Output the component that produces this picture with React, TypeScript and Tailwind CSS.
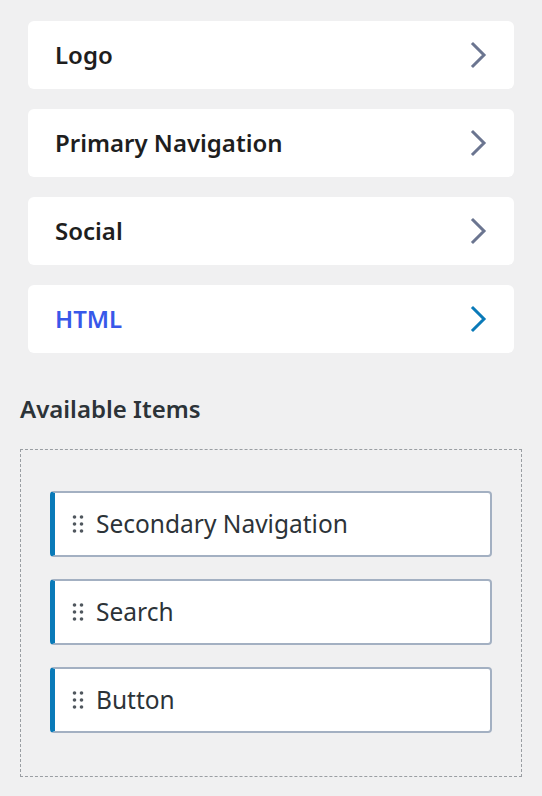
import React from "react";

const sections = [
  { label: "Logo", active: false },
  { label: "Primary Navigation", active: false },
  { label: "Social", active: false },
  { label: "HTML", active: true },
];

const available = ["Secondary Navigation", "Search", "Button"];

function Chevron({ className }: { className: string }) {
  return (
    <svg width="18" height="28" viewBox="0 0 18 28" fill="none" className={className}>
      <path d="M3 3 L14 14 L3 25" stroke="currentColor" strokeWidth="3" strokeLinecap="square" />
    </svg>
  );
}

function DragHandle() {
  return (
    <svg width="12" height="20" viewBox="0 0 12 20" className="text-[#50575e] shrink-0">
      {[3, 10, 17].map((y) => (
        <g key={y}>
          <circle cx="2.5" cy={y} r="1.8" fill="currentColor" />
          <circle cx="9.5" cy={y} r="1.8" fill="currentColor" />
        </g>
      ))}
    </svg>
  );
}

export default function App() {
  return (
    <div className="min-h-[796px] bg-[#f0f0f1] pt-[21px] font-['Noto_Sans',sans-serif]">
      <ul className="flex flex-col gap-5 px-[28px]">
        {sections.map((s) => (
          <li key={s.label} className="flex h-[68px] items-center justify-between rounded-md bg-white pl-[27px] pr-[26px]">
            <span className={`text-[24px] font-semibold ${s.active ? "text-[#3858e9]" : "text-[#1e1e1e]"}`}>{s.label}</span>
            <Chevron className={s.active ? "text-[#0a7ab8]" : "text-[#6b7590]"} />
          </li>
        ))}
      </ul>
      <h2 className="mt-[38px] pl-5 text-[24px] font-semibold text-[#2c3338]">Available Items</h2>
      <div className="mx-5 mt-[22px] flex flex-col gap-[22px] border border-dashed border-[#9a9ea3] pt-[41px] pb-[43px] pl-[29px] pr-[29px]">
        {available.map((a) => (
          <div key={a} className="flex h-[66px] items-center gap-3 rounded-[4px] border-2 border-l-[5px] border-[#a3b0c2] border-l-[#0a7ab8] bg-white pl-[17px]">
            <DragHandle />
            <span className="text-[24.5px] text-[#2c3338]">{a}</span>
          </div>
        ))}
      </div>
    </div>
  );
}
